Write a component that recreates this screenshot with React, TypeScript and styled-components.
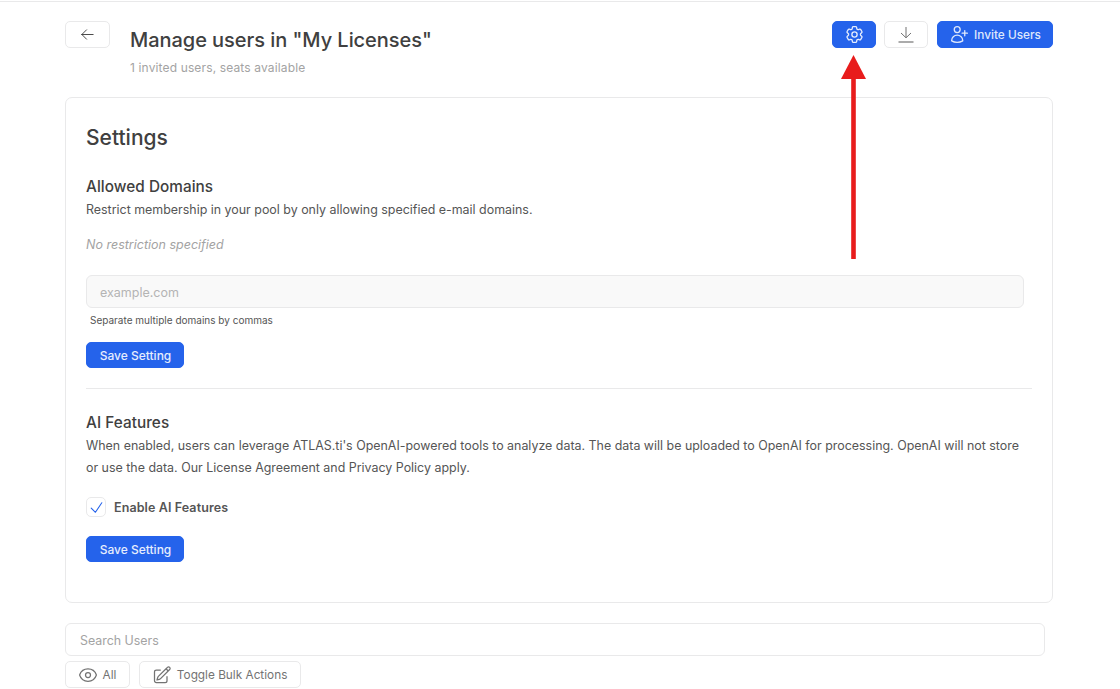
import React from 'react'
import {
  HiOutlineArrowLeft,
  HiOutlineCheck,
  HiOutlineCog6Tooth,
  HiOutlineEye,
  HiOutlinePencilSquare,
  HiOutlineUserPlus
} from 'react-icons/hi2'
import styled, { createGlobalStyle } from 'styled-components'

const COLORS = {
  BLUE: '#2563eb',
  BORDER: '#e9e9ea',
  TEXT: '#404040',
  BODY: '#555555',
  MUTED: '#a3a3a3',
  RED: '#e81c1c'
}

const GlobalStyle = createGlobalStyle`
  html, body {
    margin: 0;
    padding: 0;
    background: #ffffff;
    overflow: hidden;
  }
  body {
    font-family: Inter, "Liberation Sans", sans-serif;
    color: ${COLORS.TEXT};
  }
`

const DownloadIcon = () => (
  <svg width="18" height="18" viewBox="0 0 18 18" fill="none" stroke="#737373" strokeWidth="1">
    <path d="M9 1v10.5M4 7l5 4.8L14 7" />
    <path d="M1.5 16h15" strokeWidth="1.2" />
  </svg>
)

const App = () => (
  <>
    <GlobalStyle />
    <Page>
      <Header>
        <BackButton>
          <HiOutlineArrowLeft size={15} />
        </BackButton>
        <TitleBlock>
          <Title>Manage users in "My Licenses"</Title>
          <Subtitle>1 invited users, seats available</Subtitle>
        </TitleBlock>
        <Actions>
          <IconButton $primary>
            <HiOutlineCog6Tooth size={21} />
          </IconButton>
          <IconButton>
            <DownloadIcon />
          </IconButton>
          <InviteButton>
            <HiOutlineUserPlus size={21} />
            Invite Users
          </InviteButton>
        </Actions>
      </Header>

      <Card>
        <CardTitle>Settings</CardTitle>

        <SectionTitle>Allowed Domains</SectionTitle>
        <Description>
          Restrict membership in your pool by only allowing specified e-mail domains.
        </Description>
        <EmptyNote>No restriction specified</EmptyNote>
        <DomainInput placeholder="example.com" disabled />
        <Hint>Separate multiple domains by commas</Hint>
        <SaveButton $top={14}>Save Setting</SaveButton>

        <Divider />

        <SectionTitle>AI Features</SectionTitle>
        <Description>
          When enabled, users can leverage ATLAS.ti's OpenAI-powered tools to analyze data. The
          data will be uploaded to OpenAI for processing. OpenAI will not store or use the data.
          Our License Agreement and Privacy Policy apply.
        </Description>
        <CheckRow>
          <CheckBox>
            <HiOutlineCheck size={17} />
          </CheckBox>
          Enable AI Features
        </CheckRow>
        <SaveButton $top={19}>Save Setting</SaveButton>
      </Card>

      <SearchInput placeholder="Search Users" />
      <FilterRow>
        <FilterButton>
          <HiOutlineEye size={20} />
          All
        </FilterButton>
        <FilterButton>
          <HiOutlinePencilSquare size={20} />
          Toggle Bulk Actions
        </FilterButton>
      </FilterRow>

      <Annotation width="40" height="204" viewBox="0 0 40 204">
        <polygon points="20.5,0 33,24 8,24" fill={COLORS.RED} />
        <rect x="18.2" y="23" width="4.6" height="181" fill={COLORS.RED} />
      </Annotation>
    </Page>
  </>
)

const Page = styled.div`
  position: relative;
  box-sizing: border-box;
  width: 1120px;
  height: 688px;
  margin-top: 1px;
  overflow: hidden;
  padding: 19px 67px 0 65px;
  border-top: 1px solid ${COLORS.BORDER};
`

const Header = styled.header`
  display: flex;
  align-items: flex-start;
  height: 76px;
`

const BackButton = styled.button`
  display: flex;
  align-items: center;
  justify-content: center;
  box-sizing: border-box;
  width: 45px;
  height: 27px;
  padding: 0 0 1px;
  margin-right: 20px;
  background: #ffffff;
  border: 1px solid ${COLORS.BORDER};
  border-radius: 5px;
  color: ${COLORS.TEXT};
`

const TitleBlock = styled.div`
  flex: 1;
  padding-top: 6px;
`

const Title = styled.h1`
  margin: 0;
  font-size: 20px;
  line-height: 26px;
  font-weight: 500;
  letter-spacing: -0.05px;
  color: ${COLORS.TEXT};
`

const Subtitle = styled.div`
  margin-top: 6px;
  font-size: 12px;
  line-height: 18px;
  letter-spacing: 0.14px;
  color: ${COLORS.MUTED};
`

const Actions = styled.div`
  display: flex;
  gap: 8px;
`

const IconButton = styled.button<{ $primary?: boolean }>`
  display: flex;
  align-items: center;
  justify-content: center;
  box-sizing: border-box;
  width: 44px;
  height: 27px;
  padding: 0;
  border-radius: 5px;
  border: 1px solid ${({ $primary }) => ($primary ? COLORS.BLUE : COLORS.BORDER)};
  background: ${({ $primary }) => ($primary ? COLORS.BLUE : '#ffffff')};
  color: ${({ $primary }) => ($primary ? '#e6edfd' : '#737373')};
`

const InviteButton = styled.button`
  display: flex;
  align-items: center;
  justify-content: center;
  gap: 4px;
  box-sizing: border-box;
  width: 116px;
  height: 27px;
  margin-left: 1px;
  padding: 0;
  border: 1px solid ${COLORS.BLUE};
  border-radius: 5px;
  background: ${COLORS.BLUE};
  color: #dfe8fc;
  font-family: inherit;
  font-size: 11.8px;
  font-weight: 500;
`

const Card = styled.section`
  box-sizing: border-box;
  height: 506px;
  padding: 26px 20px 0 20px;
  border: 1px solid ${COLORS.BORDER};
  border-radius: 7px;
`

const CardTitle = styled.h2`
  margin: 0 0 26px;
  font-size: 21px;
  line-height: 27px;
  font-weight: 500;
  color: ${COLORS.TEXT};
`

const SectionTitle = styled.h3`
  margin: 0;
  font-size: 15.3px;
  line-height: 20px;
  font-weight: 500;
  letter-spacing: 0.05px;
  color: ${COLORS.TEXT};
`

const Description = styled.p`
  margin: 2px 0 0;
  font-size: 12.43px;
  line-height: 22px;
  color: ${COLORS.BODY};
`

const EmptyNote = styled.div`
  margin-top: 14px;
  font-size: 12.5px;
  line-height: 20px;
  font-style: italic;
  color: ${COLORS.MUTED};
`

const DomainInput = styled.input`
  display: block;
  box-sizing: border-box;
  width: 938px;
  height: 33px;
  margin-top: 20px;
  padding: 1px 13px 0;
  background: #f9f9f9;
  border: 1px solid ${COLORS.BORDER};
  border-radius: 6px;
  font-family: inherit;
  font-size: 12.5px;

  &::placeholder {
    color: #b4b4b4;
  }
`

const Hint = styled.div`
  margin: 5px 0 0 4px;
  font-size: 10px;
  line-height: 15px;
  color: ${COLORS.BODY};
`

const SaveButton = styled.button<{ $top: number }>`
  display: block;
  box-sizing: border-box;
  width: 98px;
  height: 26px;
  margin-top: ${({ $top }) => $top}px;
  padding: 0 0 0 1px;
  background: ${COLORS.BLUE};
  border: 1px solid ${COLORS.BLUE};
  border-radius: 5px;
  color: #e6edfd;
  font-family: inherit;
  font-size: 12px;
  font-weight: 500;
`

const Divider = styled.hr`
  height: 1px;
  margin: 20px 0 24px;
  border: 0;
  background: ${COLORS.BORDER};
`

const CheckRow = styled.label`
  display: flex;
  align-items: center;
  gap: 8px;
  margin-top: 18px;
  font-size: 12.5px;
  font-weight: 600;
  letter-spacing: 0.1px;
  color: ${COLORS.BODY};
`

const CheckBox = styled.span`
  display: flex;
  align-items: center;
  justify-content: center;
  box-sizing: border-box;
  width: 20px;
  height: 20px;
  border: 1px solid ${COLORS.BORDER};
  border-radius: 5px;
  color: ${COLORS.BLUE};
`

const SearchInput = styled.input`
  display: block;
  box-sizing: border-box;
  width: 980px;
  height: 33px;
  margin-top: 20px;
  padding: 1px 14px 0;
  border: 1px solid ${COLORS.BORDER};
  border-radius: 6px;
  font-family: inherit;
  font-size: 12.4px;

  &::placeholder {
    color: ${COLORS.MUTED};
  }
`

const FilterRow = styled.div`
  display: flex;
  gap: 9px;
  margin-top: 5px;
`

const FilterButton = styled.button`
  display: flex;
  align-items: center;
  gap: 4.5px;
  box-sizing: border-box;
  height: 27px;
  padding: 0 13px 0 12px;
  background: #ffffff;
  border: 1px solid ${COLORS.BORDER};
  border-radius: 5px;
  color: #737373;
  font-family: inherit;
  font-size: 11.8px;
`

const Annotation = styled.svg`
  position: absolute;
  left: 833px;
  top: 53px;
`

export default App
